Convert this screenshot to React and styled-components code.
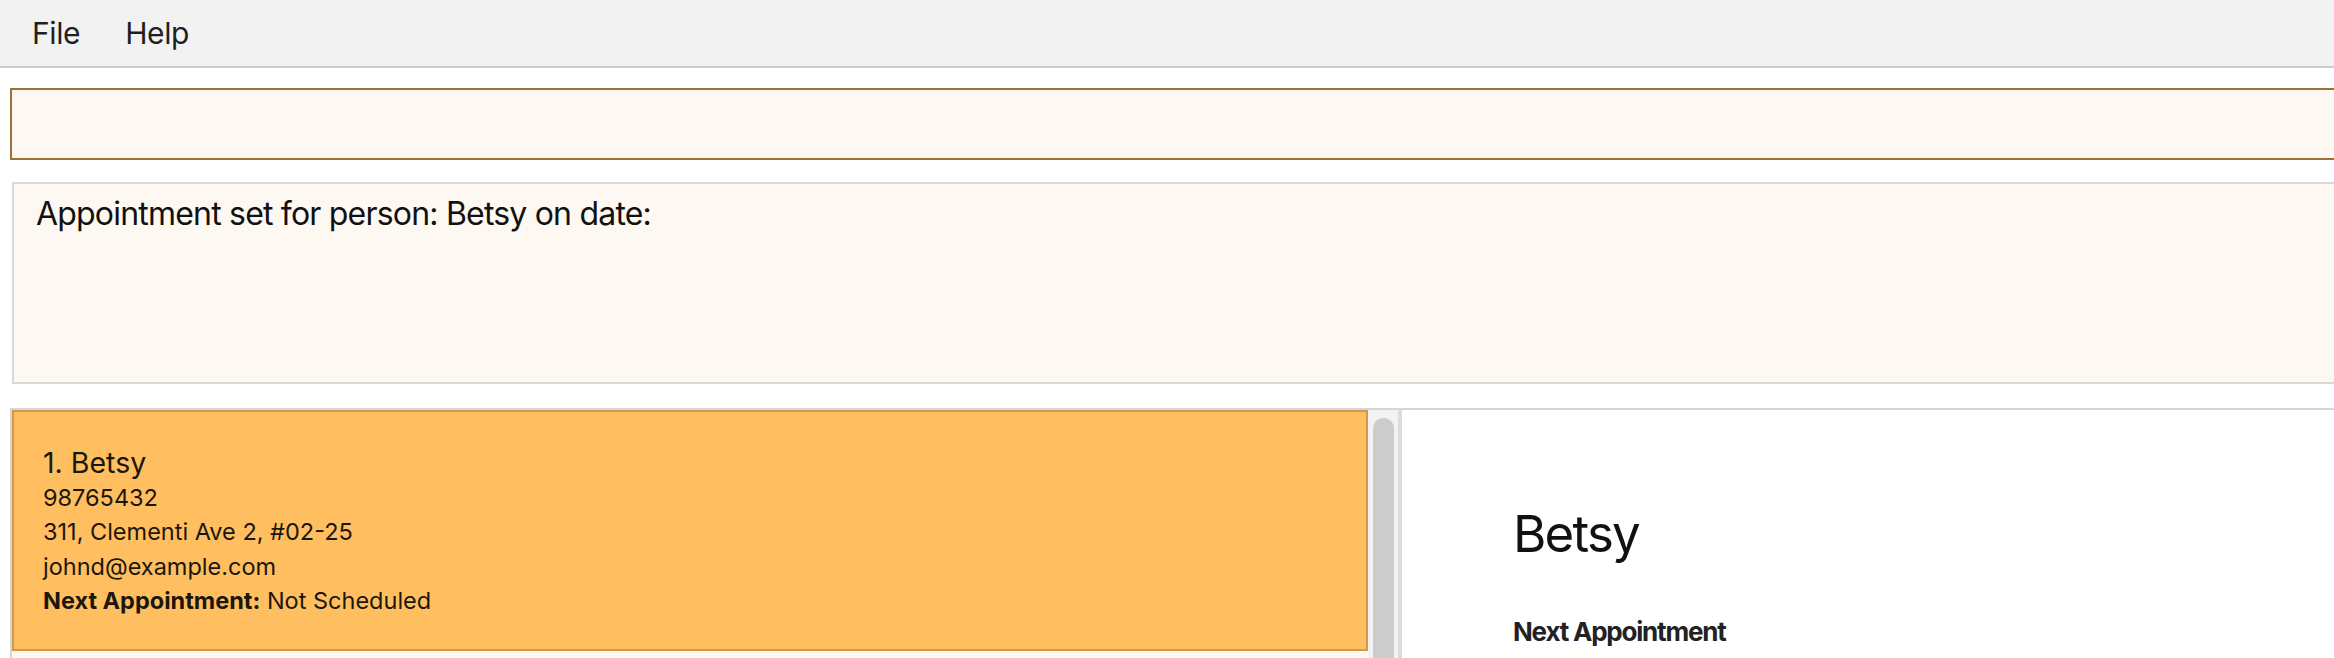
import React from "react";
import styled, {createGlobalStyle} from "styled-components";

const GlobalStyle = createGlobalStyle`
  html, body {
    margin: 0;
    padding: 0;
    background: #ffffff;
    overflow: hidden;
  }
  body {
    font-family: Inter, "Noto Sans", sans-serif;
    color: #1a1a1a;
  }
`;

const Window = styled.div`
  width: 2400px;
  height: 658px;
  overflow: hidden;
  background: #ffffff;
`;

const MenuBar = styled.div`
  height: 66px;
  display: flex;
  align-items: center;
  gap: 45px;
  padding-left: 32px;
  background: #f2f2f2;
  border-bottom: 2px solid #cccccc;
`;

const MenuItem = styled.span`
  font-size: 30px;
  color: #1f1f1f;
  letter-spacing: -0.4px;
`;

const Body = styled.div`
  display: flex;
  flex-direction: column;
  padding: 20px 0 0 10px;
`;

const CommandBox = styled.div`
  flex-shrink: 0;
  height: 68px;
  background: #fdf8f2;
  border: 2px solid #9c7038;
`;

const ResultBox = styled.div`
  flex-shrink: 0;
  height: 178px;
  margin: 22px 0 0 2px;
  padding: 10px 22px;
  background: #fdf8f2;
  border: 2px solid #d9d9d9;
  font-size: 32px;
  line-height: 40px;
  letter-spacing: -0.8px;
  color: #111111;
`;

const Lower = styled.div`
  flex-shrink: 0;
  margin-top: 24px;
  height: 300px;
  display: flex;
  border-top: 2px solid #d6d6d6;
`;

const ListPanel = styled.div`
  width: 1386px;
  display: flex;
  background: #fdf8f2;
  border-left: 2px solid #d6d6d6;
  border-right: 2px solid #dcdcdc;
`;

const List = styled.div`
  flex: 1;
`;

const Card = styled.div`
  padding: 34px 29px 30px;
  background: #ffbf60;
  border: 2px solid #d09a4c;
  color: #1c170e;
`;

const Line = styled.div`
  font-size: ${(p) => (p.$big ? "28.5px" : "23.5px")};
  line-height: 34.5px;
  white-space: nowrap;

  b {
    font-weight: 700;
  }
`;

const Track = styled.div`
  width: 30px;
  padding: 8px 4px 0 5px;
  box-sizing: border-box;
  background: #f2f2f2;
`;

const Thumb = styled.div`
  height: 100%;
  background: #cccccc;
  border-radius: 10px 10px 0 0;
`;

const Detail = styled.div`
  flex: 1;
  padding: 93px 0 0 111px;
  background: #ffffff;
  border-left: 2px solid #dcdcdc;
`;

const DetailName = styled.div`
  font-size: 51px;
  color: #111111;
  letter-spacing: -1.8px;
`;

const DetailLabel = styled.div`
  margin-top: 52px;
  font-size: 26px;
  font-weight: 700;
  color: #222222;
  letter-spacing: -1.2px;
`;

export default function App() {
  return (
    <Window>
      <GlobalStyle />
      <MenuBar>
        <MenuItem>File</MenuItem>
        <MenuItem>Help</MenuItem>
      </MenuBar>
      <Body>
        <CommandBox />
        <ResultBox>Appointment set for person: Betsy on date:</ResultBox>
        <Lower>
          <ListPanel>
            <List>
              <Card>
                <Line $big>1. Betsy</Line>
                <Line>98765432</Line>
                <Line>311, Clementi Ave 2, #02-25</Line>
                <Line>johnd@example.com</Line>
                <Line>
                  <b>Next Appointment:</b> Not Scheduled
                </Line>
              </Card>
            </List>
            <Track>
              <Thumb />
            </Track>
          </ListPanel>
          <Detail>
            <DetailName>Betsy</DetailName>
            <DetailLabel>Next Appointment</DetailLabel>
          </Detail>
        </Lower>
      </Body>
    </Window>
  );
}
